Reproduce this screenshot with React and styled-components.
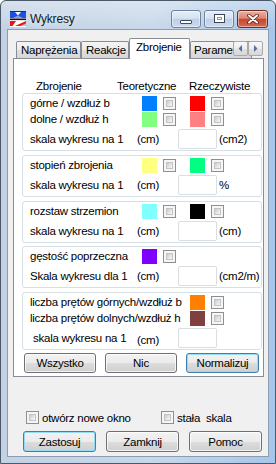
import React from "react";
import styled, { createGlobalStyle } from "styled-components";

const GlobalStyle = createGlobalStyle`
  html, body {
    margin: 0;
    padding: 0;
    background: #ffffff;
  }
  body {
    font-family: "Liberation Sans", Arial, sans-serif;
    font-size: 11px;
    letter-spacing: -0.25px;
    color: #000;
  }
  *, *::before, *::after {
    box-sizing: border-box;
  }
`;

const Window = styled.div`
  width: 276px;
  height: 464px;
  display: flex;
  flex-direction: column;
  border: 1px solid #4b5867;
  border-radius: 6px 6px 0 0;
  background:
    linear-gradient(to bottom, rgba(255, 255, 255, 0.35), rgba(255, 255, 255, 0) 28px),
    linear-gradient(to right, #c2d2e4 0%, #c8d8ea 55%, #a7c6e9 100%);
  padding: 0 6px 6px;
  overflow: hidden;
`;

const TitleBar = styled.div`
  height: 28px;
  flex: none;
  display: flex;
  align-items: center;
  padding: 7px 1px 0 3px;
`;

const Title = styled.span`
  margin-left: 4px;
  font-size: 12px;
  letter-spacing: -0.2px;
  color: #101820;
  text-shadow: 0 0 6px rgba(255, 255, 255, 0.9);
`;

const CaptionButtons = styled.div`
  margin-left: auto;
  display: flex;
  gap: 3px;
`;

const CaptionButton = styled.div`
  width: ${(p) => p.$w}px;
  height: 18px;
  display: flex;
  align-items: center;
  justify-content: center;
  border: 1px solid ${(p) => (p.$close ? "#6d2c20" : "#6f83a0")};
  border-radius: 3px;
  background: ${(p) =>
    p.$close
      ? "linear-gradient(#eab0a3 0%, #de8672 45%, #c8462d 52%, #d56a52 100%)"
      : "linear-gradient(#e6eef7 0%, #d6e2f0 45%, #bfd0e5 52%, #cadaee 100%)"};
  box-shadow: inset 0 0 0 1px rgba(255, 255, 255, 0.45);
`;

const MinGlyph = styled.span`
  width: 12px;
  height: 4px;
  margin-top: 6px;
  border: 1px solid #3f4d5f;
  border-radius: 1px;
  background: #fff;
`;

const MaxGlyph = styled.span`
  width: 11px;
  height: 9px;
  border: 1px solid #3b4656;
  background: #fff;
  box-shadow: inset 0 0 0 2px #fff, inset 0 0 0 3px #8a98aa;
`;

const Client = styled.div`
  flex: 1;
  display: flex;
  flex-direction: column;
  background: #f0f0f0;
  border: 1px solid #8c9db2;
  padding: 8px 4px 0 5px;
`;

const TabStrip = styled.div`
  position: relative;
  height: 20px;
  flex: none;
  display: flex;
  align-items: flex-end;
  padding-left: 3px;
  z-index: 1;
`;

const Tab = styled.div`
  flex: none;
  width: ${(p) => p.$w}px;
  height: ${(p) => (p.$active ? 21 : 17)}px;
  margin-bottom: ${(p) => (p.$active ? -1 : 0)}px;
  border: 1px solid #898c95;
  border-bottom: none;
  border-radius: 2px 2px 0 0;
  background: ${(p) =>
    p.$active ? "#ffffff" : "linear-gradient(#f4f4f4 0%, #ececec 50%, #e0e0e0 51%, #d6d6d6 100%)"};
  padding: 2px 0 0 ${(p) => p.$pl}px;
  line-height: 13px;
  font-size: 11.5px;
  white-space: nowrap;
  overflow: hidden;
`;

const TabScroll = styled.div`
  position: absolute;
  right: 1px;
  top: 3px;
  display: flex;
`;

const ScrollArrow = styled.div`
  width: 15px;
  height: 15px;
  display: flex;
  align-items: center;
  justify-content: center;
  border: 1px solid #a9a9a9;
  border-radius: 2px;
  background: linear-gradient(#f7f7f7 0%, #ededed 50%, #e0e0e0 51%, #d9d9d9 100%);
`;

const Panel = styled.div`
  height: 319px;
  flex: none;
  border: 1px solid #898c95;
  background: #ffffff;
  padding: 20px 1px 0 8px;
  display: flex;
  flex-direction: column;
`;

const Header = styled.div`
  height: 14px;
  display: flex;
  align-items: center;
  padding-left: 14px;
  font-size: 11.5px;
`;

const HeaderCell = styled.span`
  width: ${(p) => p.$w}px;
  flex: none;
`;

const Group = styled.div`
  margin-top: ${(p) => p.$mt || 0}px;
  border: 1px solid #d5dfe5;
  border-radius: 3px;
  padding: 1px 0 1px 7px;
  display: flex;
  flex-direction: column;
`;

const ColorRow = styled.div`
  height: 16px;
  display: flex;
  align-items: center;
  white-space: nowrap;
  font-size: 11.5px;
`;

const RowLabel = styled.span`
  width: 112px;
  flex: none;
`;

const Swatch = styled.span`
  width: 15px;
  height: 15px;
  flex: none;
  margin-right: 6px;
  background: ${(p) => p.$color};
`;

const Blank = styled.span`
  width: 48px;
  flex: none;
`;

const Check = styled.span`
  position: relative;
  width: 13px;
  height: 13px;
  flex: none;
  margin-right: ${(p) => p.$mr || 0}px;
  border: 1px solid #8f8f8f;
  background: #f6f6f6;

  &::after {
    content: "";
    position: absolute;
    inset: 2px;
    border: 1px solid #c2c4c7;
    background: linear-gradient(135deg, #c9cbce 0%, #e6e7e8 60%, #f7f7f7 100%);
  }
`;

const ScaleRow = styled.div`
  margin-top: 2px;
  height: 20px;
  display: flex;
  align-items: center;
  white-space: nowrap;
  font-size: 11.5px;
`;

const ScaleLabel = styled.span`
  width: 107px;
  flex: none;
  padding-left: ${(p) => p.$indent || 0}px;
`;

const CmText = styled.span`
  width: 41px;
  flex: none;
  padding-top: ${(p) => p.$drop || 0}px;
`;

const Field = styled.input`
  width: 39px;
  height: 20px;
  flex: none;
  margin: 0 2px 0 0;
  padding: 0;
  border: 1px solid #d9dee3;
  border-radius: 2px;
  background: #ffffff;
`;

const PanelButtons = styled.div`
  margin-top: 3px;
  padding-left: 2px;
  display: flex;
  gap: 9px;
`;

const Button = styled.button`
  width: ${(p) => p.$w || 72}px;
  height: ${(p) => p.$h || 20}px;
  flex: none;
  padding: 0;
  font-family: inherit;
  font-size: 11.5px;
  letter-spacing: -0.25px;
  color: #000;
  border: 1px solid ${(p) => (p.$default ? "#3c7fb1" : "#707070")};
  border-radius: 3px;
  background: linear-gradient(#f2f2f2 0%, #ebebeb 50%, #dddddd 51%, #cfcfcf 100%);
  box-shadow: inset 0 0 0 1px ${(p) => (p.$default ? "#97dcf5" : "rgba(255, 255, 255, 0.75)")};
`;

const OptionRow = styled.div`
  margin-top: 34px;
  height: 13px;
  padding-left: 13px;
  display: flex;
`;

const Option = styled.label`
  width: ${(p) => p.$w}px;
  flex: none;
  display: flex;
  align-items: center;
  gap: 3px;
  white-space: pre;
  font-size: 11.5px;
`;

const DialogButtons = styled.div`
  margin-top: 7px;
  padding-left: 10px;
  display: flex;
  gap: 10px;
`;

const AppIcon = () => (
  <svg width="16" height="16" viewBox="0 0 16 16">
    <rect x="0" y="0" width="16" height="16" fill="#ffffff" />
    <rect x="0" y="0" width="16" height="1" fill="#1b2a6b" />
    <path d="M0 1H5L8 4.5L11 1H16V7H0Z" fill="#1d4fe6" />
    <path d="M3 7L8 4.5L13 7Z" fill="#7f9cf0" />
    <rect x="0" y="7.5" width="16" height="1.6" fill="#111111" />
    <path d="M0 10H6L2.5 15H0Z" fill="#e8141b" />
    <path d="M5 15L16 10V15Z" fill="#e8141b" />
    <path d="M10 15L16 12.3V15Z" fill="#b9b9b9" />
  </svg>
);

const CloseGlyph = () => (
  <svg width="12" height="10" viewBox="0 0 12 10">
    <path d="M2 1.5L10 8.5M10 1.5L2 8.5" stroke="#5a1e14" strokeWidth="3.6" strokeLinecap="round" />
    <path d="M2 1.5L10 8.5M10 1.5L2 8.5" stroke="#ffffff" strokeWidth="2" strokeLinecap="round" />
  </svg>
);

const Arrow = ({ dir }) => (
  <svg width="5" height="7" viewBox="0 0 5 7">
    <path d={dir === "left" ? "M4 0V7L0.5 3.5Z" : "M1 0V7L4.5 3.5Z"} fill="#52729f" />
  </svg>
);

const Pair = ({ color, last }) =>
  color ? (
    <>
      <Swatch $color={color} />
      <Check $mr={last ? 0 : 14} />
    </>
  ) : (
    <Blank />
  );

const Line = ({ label, t, r }) => (
  <ColorRow>
    <RowLabel>{label}</RowLabel>
    <Pair color={t} />
    {r && <Pair color={r} last />}
  </ColorRow>
);

const Scale = ({ label = "skala wykresu na 1", unit, indent, drop }) => (
  <ScaleRow>
    <ScaleLabel $indent={indent}>{label}</ScaleLabel>
    <CmText $drop={drop}>(cm)</CmText>
    <Field type="text" defaultValue="" />
    <span>{unit}</span>
  </ScaleRow>
);

export default function App() {
  return (
    <>
      <GlobalStyle />
      <Window>
        <TitleBar>
          <AppIcon />
          <Title>Wykresy</Title>
          <CaptionButtons>
            <CaptionButton $w={30}>
              <MinGlyph />
            </CaptionButton>
            <CaptionButton $w={30}>
              <MaxGlyph />
            </CaptionButton>
            <CaptionButton $w={31} $close>
              <CloseGlyph />
            </CaptionButton>
          </CaptionButtons>
        </TitleBar>

        <Client>
          <TabStrip>
            <Tab $w={65} $pl={4}>Naprężenia</Tab>
            <Tab $w={48} $pl={4}>Reakcje</Tab>
            <Tab $w={61} $pl={6} $active>Zbrojenie</Tab>
            <Tab $w={62} $pl={3}>Parametry</Tab>
            <TabScroll>
              <ScrollArrow>
                <Arrow dir="left" />
              </ScrollArrow>
              <ScrollArrow>
                <Arrow dir="right" />
              </ScrollArrow>
            </TabScroll>
          </TabStrip>

          <Panel>
            <Header>
              <HeaderCell $w={81}>Zbrojenie</HeaderCell>
              <HeaderCell $w={72}>Teoretyczne</HeaderCell>
              <HeaderCell $w={70}>Rzeczywiste</HeaderCell>
            </Header>

            <Group>
              <Line label="górne / wzdłuż b" t="#0080ff" r="#ff0000" />
              <Line label="dolne / wzdłuż h" t="#80ff80" r="#ff8080" />
              <Scale unit="(cm2)" />
            </Group>

            <Group $mt={4}>
              <Line label="stopień zbrojenia" t="#ffff80" r="#00ff80" />
              <Scale unit="%" />
            </Group>

            <Group $mt={4}>
              <Line label="rozstaw strzemion" t="#80ffff" r="#000000" />
              <Scale unit="(cm)" />
            </Group>

            <Group $mt={3}>
              <Line label="gęstość poprzeczna" t="#8000ff" />
              <Scale label="Skala wykresu dla 1" unit="(cm2/m)" />
            </Group>

            <Group $mt={4}>
              <Line label="liczba prętów górnych/wzdłuż b" r="#ff8000" />
              <Line label="liczba prętów dolnych/wzdłuż h" r="#804040" />
              <Scale indent={3} drop={3} />
            </Group>

            <PanelButtons>
              <Button>Wszystko</Button>
              <Button>Nic</Button>
              <Button $w={73} $default>Normalizuj</Button>
            </PanelButtons>
          </Panel>

          <OptionRow>
            <Option $w={135}>
              <Check />
              otwórz nowe okno
            </Option>
            <Option $w={90}>
              <Check />
              {"stała  skala"}
            </Option>
          </OptionRow>

          <DialogButtons>
            <Button $w={73} $h={21} $default>Zastosuj</Button>
            <Button $w={73} $h={21}>Zamknij</Button>
            <Button $w={73} $h={21}>Pomoc</Button>
          </DialogButtons>
        </Client>
      </Window>
    </>
  );
}
